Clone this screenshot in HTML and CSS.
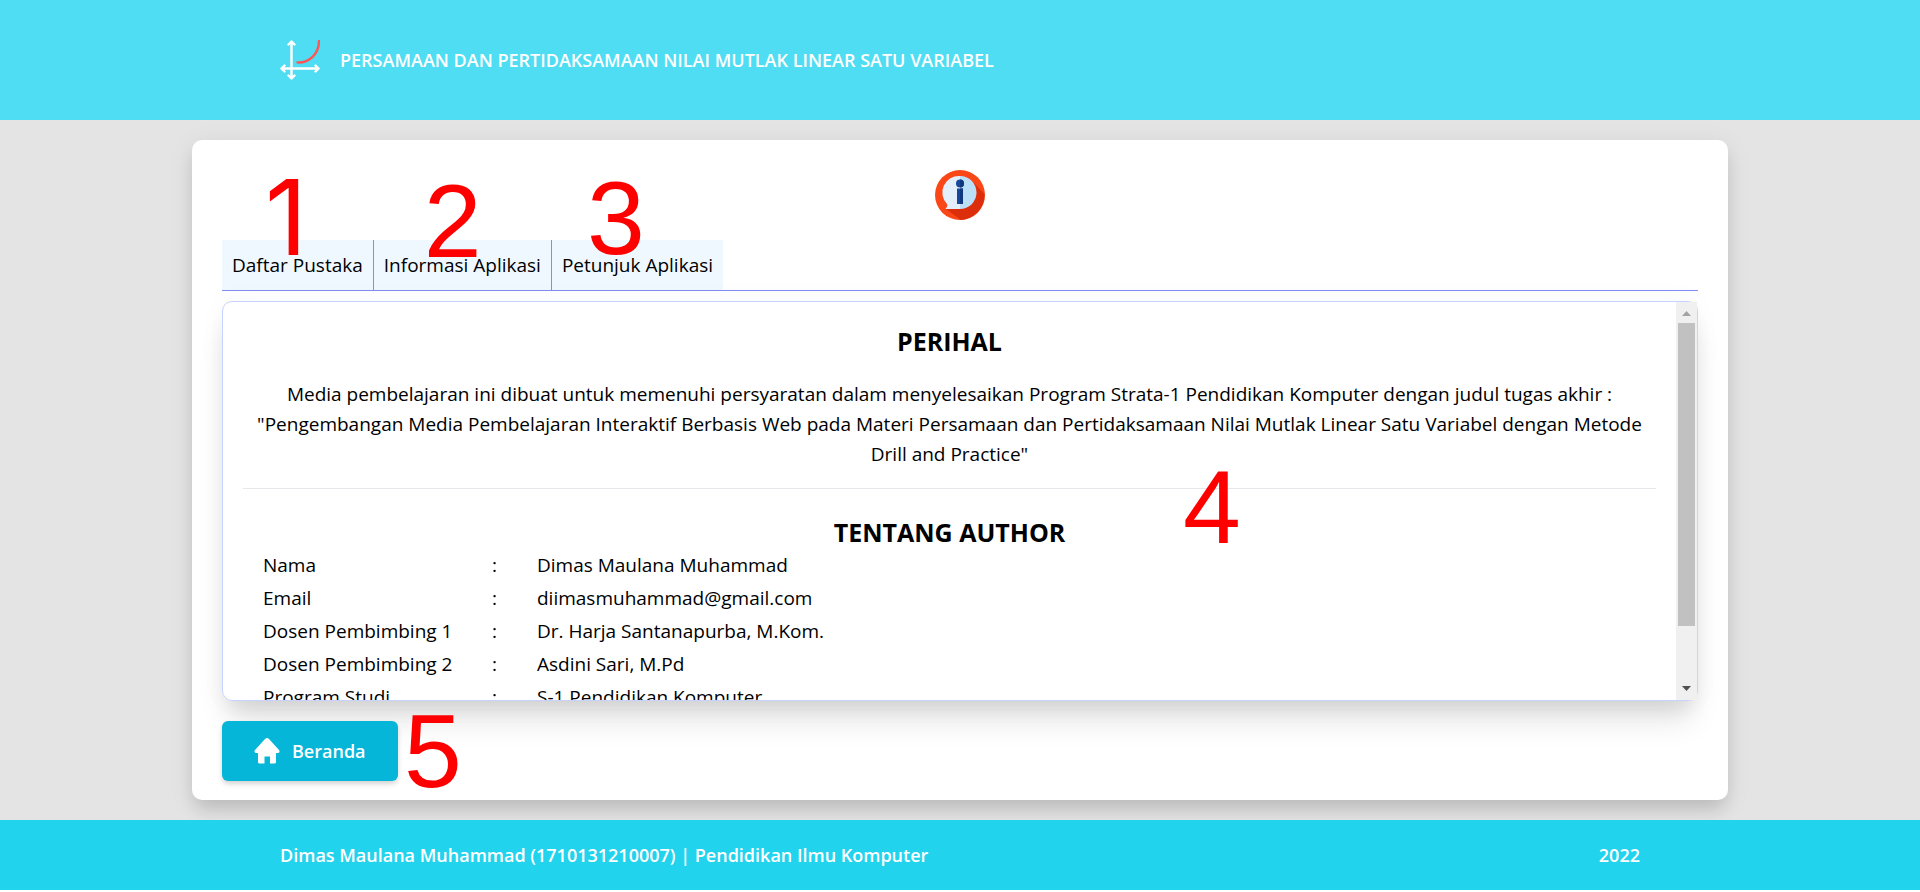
FILE: index.html
```html
<!DOCTYPE html>
<html lang="id">
<head>
<meta charset="utf-8">
<title>Perihal</title>
<link rel="stylesheet" href="styles.css">
</head>
<body>
<header class="site-header">
  <svg class="logo" viewBox="0 0 40 40" fill="none" stroke="#fff" stroke-width="2.4" stroke-linecap="round" stroke-linejoin="round">
    <path d="M11.5 1.500V38.500M8.500 4.500L11.500 1.500L14.500 4.500M8.500 35.500L11.500 38.500L14.500 35.500M1.500 28.500H38.500M4.500 25.500L1.500 28.500L4.500 31.500M35.500 25.500L38.500 28.500L35.500 31.500"/>
    <path d="M17.500 22.500C29 23 39 14 39 1" stroke="#f55"/>
  </svg>
  <h1 class="site-title">PERSAMAAN DAN PERTIDAKSAMAAN NILAI MUTLAK LINEAR SATU VARIABEL</h1>
</header>
<main class="card">
  <svg class="info" viewBox="0 0 50 50">
    <circle cx="25" cy="25" r="25" fill="#fb4617"/>
    <path d="M38 12L49.500 24A25 25 0 0 1 26 50L11 39Z" fill="#dc2e0b"/>
    <path d="M25 6A16.500 16.500 0 0 0 12 34Q13 36 10.500 39H25Z" fill="#e3f0fb"/>
    <path d="M25 6A16.500 16.500 0 0 1 25 39Z" fill="#bbdef9"/>
    <circle cx="25" cy="13.500" r="4" fill="#18489b"/>
    <path d="M22 18.500H28V34H22Z" fill="#18489b"/>
    <path d="M25 9.500A4 4 0 0 1 25 17.500ZM25 18.500H28V34H25Z" fill="#10387f"/>
  </svg>
  <nav class="tabs">
    <button class="tab" type="button">Daftar Pustaka<span class="mark mark-1">1</span></button>
    <button class="tab" type="button">Informasi Aplikasi<span class="mark mark-2">2</span></button>
    <button class="tab" type="button">Petunjuk Aplikasi<span class="mark mark-3">3</span></button>
  </nav>
  <div class="panel">
    <section class="panel-content">
      <div class="about">
        <h2 class="heading">PERIHAL</h2>
        <p class="about-text">Media pembelajaran ini dibuat untuk memenuhi persyaratan dalam menyelesaikan Program Strata-1 Pendidikan Komputer dengan judul tugas akhir :<br>"Pengembangan Media Pembelajaran Interaktif Berbasis Web pada Materi Persamaan dan Pertidaksamaan Nilai Mutlak Linear Satu Variabel dengan Metode Drill and Practice"</p>
      </div>
      <div class="author">
        <h2 class="heading">TENTANG AUTHOR</h2>
        <table class="author-table">
          <tr><th scope="row">Nama</th><td class="colon">:</td><td>Dimas Maulana Muhammad</td></tr>
          <tr><th scope="row">Email</th><td class="colon">:</td><td>diimasmuhammad@gmail.com</td></tr>
          <tr><th scope="row">Dosen Pembimbing 1</th><td class="colon">:</td><td>Dr. Harja Santanapurba, M.Kom.</td></tr>
          <tr><th scope="row">Dosen Pembimbing 2</th><td class="colon">:</td><td>Asdini Sari, M.Pd</td></tr>
          <tr><th scope="row">Program Studi</th><td class="colon">:</td><td>S-1 Pendidikan Komputer</td></tr>
        </table>
      </div>
    </section>
    <div class="scrollbar" aria-hidden="true">
      <svg class="arrow" viewBox="0 0 21 21"><path d="M6 14L10.500 9L15 14Z" fill="#a3a3a3"/></svg>
      <div class="track"><div class="thumb"></div></div>
      <svg class="arrow" viewBox="0 0 21 21"><path d="M6 7L10.500 12L15 7Z" fill="#505050"/></svg>
    </div>
    <span class="mark mark-4">4</span>
  </div>
  <div class="actions">
    <button class="home" type="button">
      <svg class="home-icon" viewBox="0 0 26 26" fill="#fff"><path d="M13 0Q14 0 15 1L25 12Q26.500 14.500 24 15H22V24Q22 25.500 20.500 25.500H16V18.500H10.500V25.500H5.500Q4 25.500 4 24V15H2Q-.5 14.500 1 12L11 1Q12 0 13 0Z"/></svg>
      Beranda
    </button>
    <span class="mark mark-5">5</span>
  </div>
</main>
<footer class="site-footer">
  <span>Dimas Maulana Muhammad (1710131210007) | Pendidikan Ilmu Komputer</span>
  <span>2022</span>
</footer>
</body>
</html>
```
FILE: styles.css
```css
* { box-sizing: border-box; margin: 0; }

html { background: #fff; }

body {
  font-family: "Open Sans", "Noto Sans", sans-serif;
  font-size: 19px;
  line-height: 30px;
  color: #000;
  background: #e4e4e4;
}

button { font: inherit; color: inherit; border: 0; cursor: pointer; }

.site-header {
  display: flex;
  align-items: center;
  gap: 20px;
  height: 120px;
  padding: 0 280px;
  background: #4eddf2;
}

.logo { width: 40px; height: 40px; }

.site-title { font-size: 18px; font-weight: 600; color: #fff; }

.card {
  width: 80%;
  margin: 20px auto;
  padding: 30px 30px 19px;
  border-radius: 10px;
  background: #fff;
  box-shadow: 0 12px 18px -4px rgba(0, 0, 0, .14), 0 5px 26px rgba(0, 0, 0, .08);
}

.info { display: block; width: 50px; height: 50px; margin: 0 auto 20px; }

.tabs { display: flex; border-bottom: 1px solid #818cf8; }

.tab {
  position: relative;
  padding: 10px;
  background: #f0f8ff;
  border-right: 1px solid #818cf8;
}

.tab:last-child { border-right: 0; }

.mark {
  position: absolute;
  font: 104px/104px "Liberation Sans", Arial, sans-serif;
  color: #f00;
  pointer-events: none;
  z-index: 1;
}

.mark-1 { left: 43px; top: -75px; font-family: Inter, sans-serif; }
.mark-2 { left: 50px; top: -71px; }
.mark-3 { left: 35px; top: -74px; }
.mark-4 { left: 65%; top: 153px; margin-left: 2px; }
.mark-5 { left: 182px; top: -22px; }

.panel {
  position: relative;
  display: flex;
  height: 400px;
  margin-top: 10px;
  border: 1px solid #c7d2fe;
  border-radius: 10px;
  box-shadow: 0 25px 31px -6px rgba(0, 0, 0, .11), 0 12px 20px -6px rgba(0, 0, 0, .08), 0 0 30px rgba(0, 0, 0, .03);
}

.panel-content { flex: 1; padding: 20px; overflow-y: auto; }

.scrollbar { display: flex; flex-direction: column; width: 21px; background: #f0f0f0; }

.arrow { width: 21px; height: 21px; }

.track { flex: 1; padding: 0 2px; }

.thumb { height: 85%; background: #c1c1c1; }

.heading { font-size: 25px; line-height: 38px; font-weight: 700; text-align: center; }

.about { padding-bottom: 19px; border-bottom: 1px solid #e5e7eb; }

.about-text { margin-top: 19px; padding: 0 10px; text-align: center; }

.author { padding: 24px 20px 0; }

.author .heading { line-height: 38px; }

.author-table { margin-top: -2px; border-collapse: collapse; }

.author-table th, .author-table td { padding: 0; line-height: 33px; font-weight: 400; text-align: left; white-space: nowrap; }

.author-table th { width: 229px; }

.author-table .colon { width: 45px; }

.actions { position: relative; margin-top: 20px; }

.home {
  display: flex;
  align-items: center;
  gap: 12px;
  padding: 15px 32px;
  border-radius: 6px;
  background: #06b6d8;
  color: #fff;
  font-size: 18px;
  font-weight: 600;
  box-shadow: 0 4px 6px -1px rgba(0, 0, 0, .12), 0 2px 4px rgba(0, 0, 0, .08);
}

.home-icon { width: 26px; height: 26px; }

.site-footer {
  position: relative;
  display: flex;
  justify-content: space-between;
  padding: 20px 280px;
  background: #22d3ee;
  color: #fff;
  font-size: 18px;
  font-weight: 600;
}
```
